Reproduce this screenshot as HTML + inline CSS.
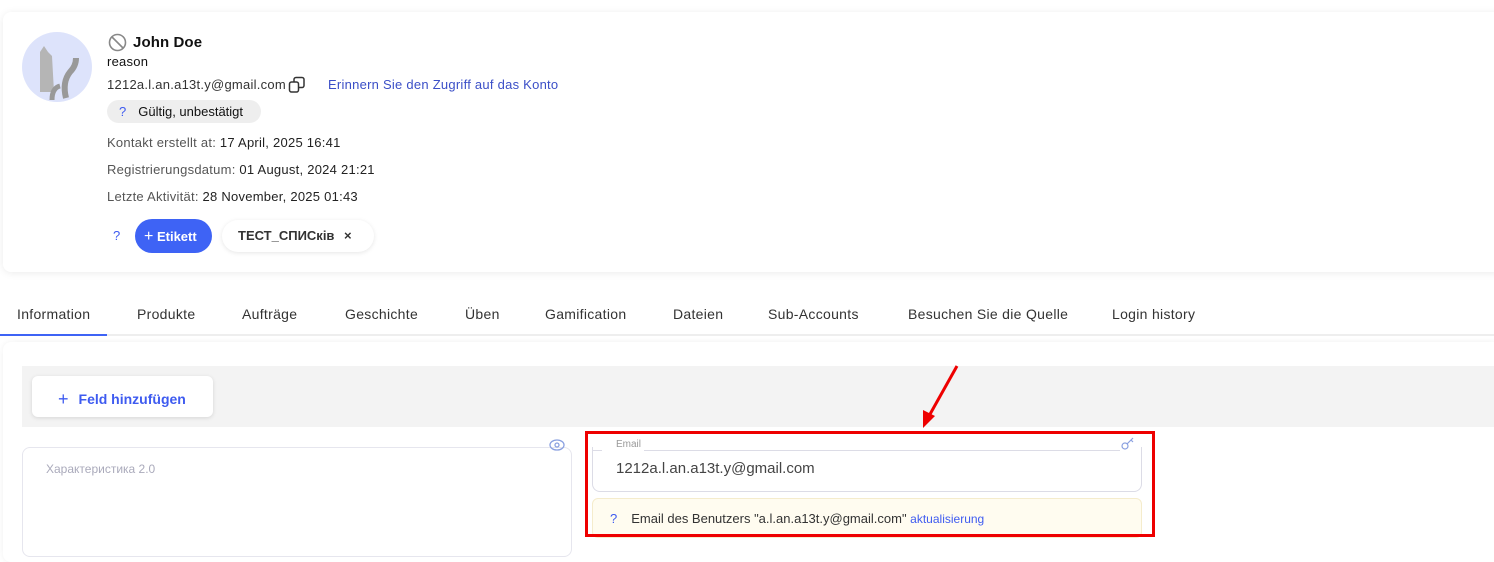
<!DOCTYPE html>
<html><head><meta charset="utf-8"><style>
*{box-sizing:border-box;margin:0;padding:0}
body{width:1494px;height:552px;overflow:hidden;background:#fff;font-family:"Liberation Sans","Noto Sans CJK SC",sans-serif;color:#222;position:relative}
.a{position:absolute}
.card{left:3px;top:12px;width:1500px;height:260px;background:#fff;border-radius:8px;box-shadow:0 1px 8px rgba(0,0,0,.08)}
.t13{font-size:13px;letter-spacing:.25px}
.lbl{color:#555}
.tab{position:absolute;top:306px;font-size:14px;color:#333;letter-spacing:.3px}
</style></head><body>
<div class="a card"></div>
<div class="a" style="left:22px;top:32px;width:70px;height:70px;border-radius:50%;background:#dde3fb;overflow:hidden">
<svg width="70" height="70" viewBox="0 0 70 70"><path d="M18 20 L22 14 L26 20 L30 24 L32 60 L18 60 Z" fill="#b5b5b5"/><path d="M44 66 Q40 50 48 40 Q54 34 54 26" stroke="#999" stroke-width="6" fill="none"/><path d="M30 68 Q30 56 38 54" stroke="#999" stroke-width="5" fill="none"/></svg></div>
<svg class="a" style="left:108px;top:33px" width="19" height="19" viewBox="0 0 19 19"><circle cx="9.5" cy="9.5" r="8" fill="none" stroke="#888" stroke-width="1.6"/><line x1="4" y1="4" x2="15" y2="15" stroke="#888" stroke-width="1.6"/></svg>
<div class="a" style="left:133px;top:34px;font-size:15px;font-weight:bold;color:#111;letter-spacing:.1px">John Doe</div>
<div class="a t13" style="left:107px;top:54px;color:#111">reason</div>
<div class="a t13" style="left:107px;top:77px;color:#333">1212a.l.an.a13t.y@gmail.com</div>
<svg class="a" style="left:288px;top:76px" width="18" height="18" viewBox="0 0 18 18"><rect x="1.5" y="6" width="9" height="10" rx="2" fill="none" stroke="#333" stroke-width="1.5"/><path d="M6 6V3.5a2 2 0 0 1 2-2h6a2 2 0 0 1 2 2v6a2 2 0 0 1-2 2h-3.5" fill="none" stroke="#333" stroke-width="1.5"/></svg>
<div class="a t13" style="left:328px;top:77px;color:#3b4fc7">Erinnern Sie den Zugriff auf das Konto</div>
<div class="a t13" style="left:107px;top:100px;height:23px;width:154px;background:#eee;border-radius:12px;padding:4px 0 0 12px;color:#111;letter-spacing:0"><span style="color:#3e5bf0;margin-right:12px">?</span>Gültig, unbestätigt</div>
<div class="a t13" style="left:107px;top:135px"><span class="lbl">Kontakt erstellt at: </span>17 April, 2025 16:41</div>
<div class="a t13" style="left:107px;top:162px"><span class="lbl">Registrierungsdatum: </span>01 August, 2024 21:21</div>
<div class="a t13" style="left:107px;top:189px"><span class="lbl">Letzte Aktivität: </span>28 November, 2025 01:43</div>
<div class="a t13" style="left:113px;top:228px;color:#3e5bf0">?</div>
<div class="a" style="left:135px;top:219px;width:77px;height:34px;background:#3e63f5;border-radius:17px;color:#fff;font-weight:bold;padding:9px 0 0 9px;font-size:13px"><span style="font-size:16px;font-weight:normal">+</span> Etikett</div>
<div class="a" style="left:222px;top:220px;width:152px;height:32px;background:#fff;border-radius:16px;box-shadow:0 1px 5px rgba(0,0,0,.1);padding:8px 0 0 16px;font-weight:bold;color:#333;font-size:13px">ТЕСТ_СПИСків <span style="margin-left:6px">×</span></div>
<div class="tab" style="left:17px">Information</div>
<div class="tab" style="left:137px">Produkte</div>
<div class="tab" style="left:242px">Aufträge</div>
<div class="tab" style="left:345px">Geschichte</div>
<div class="tab" style="left:465px">Üben</div>
<div class="tab" style="left:545px">Gamification</div>
<div class="tab" style="left:673px">Dateien</div>
<div class="tab" style="left:768px">Sub-Accounts</div>
<div class="tab" style="left:908px">Besuchen Sie die Quelle</div>
<div class="tab" style="left:1112px">Login history</div>
<div class="a" style="left:0;top:334px;width:1494px;height:2px;background:#eee"></div>
<div class="a" style="left:0;top:334px;width:107px;height:2px;background:#3e63f5"></div>
<div class="a" style="left:3px;top:342px;width:1500px;height:220px;border-radius:8px;box-shadow:0 0 6px rgba(0,0,0,.06)"></div>
<div class="a" style="left:22px;top:366px;width:1480px;height:61px;background:#f3f3f3"></div>
<div class="a" style="left:32px;top:376px;width:181px;height:41px;background:#fff;border-radius:6px;box-shadow:0 1px 4px rgba(0,0,0,.12);font-size:14px;font-weight:bold;color:#3e5bf0;padding:12px 0 0 26px"><span style="font-size:18px;font-weight:normal;position:relative;top:1px;margin-right:10px">+</span>Feld hinzufügen</div>
<div class="a" style="left:22px;top:447px;width:550px;height:110px;border:1px solid #e6e6ee;border-radius:8px"></div>
<div class="a" style="left:46px;top:462px;font-size:12px;color:#aab">Характеристика 2.0</div>
<svg class="a" style="left:549px;top:437px" width="16" height="16" viewBox="0 0 16 16"><ellipse cx="8" cy="8" rx="7" ry="5" fill="none" stroke="#8aa0e0" stroke-width="1.3"/><circle cx="8" cy="8" r="2" fill="none" stroke="#8aa0e0" stroke-width="1.3"/></svg>
<div class="a" style="left:592px;top:447px;width:550px;height:45px;border:1px solid #dcdce6;border-top:none;border-radius:0 0 8px 8px"></div>
<div class="a" style="left:592px;top:450px;width:10px;height:1px;background:#dcdce6"></div>
<div class="a" style="left:644px;top:450px;width:476px;height:1px;background:#dcdce6"></div>
<div class="a" style="left:616px;top:439px;font-size:10px;color:#999">Email</div>
<svg class="a" style="left:1120px;top:437px" width="16" height="14" viewBox="0 0 16 14"><circle cx="5" cy="9" r="3" fill="none" stroke="#8aa0e0" stroke-width="1.2"/><path d="M7 7L13 1M11 3l2 2" stroke="#8aa0e0" stroke-width="1.2" fill="none"/></svg>
<div class="a" style="left:616px;top:460px;font-size:15px;color:#444">1212a.l.an.a13t.y@gmail.com</div>
<div class="a" style="left:592px;top:498px;width:550px;height:40px;background:#fffcf0;border:1px solid #f5eccc;border-radius:6px"></div>
<div class="a" style="left:610px;top:511px;color:#333;font-size:13px"><span style="color:#3e5bf0;margin-right:14px">?</span>Email des Benutzers "a.l.an.a13t.y@gmail.com" <span style="color:#3e5bf0;font-size:12px">aktualisierung</span></div>
<div class="a" style="left:585px;top:431px;width:570px;height:106px;border:3px solid #ee0000"></div>
<svg class="a" style="left:915px;top:362px" width="50" height="70" viewBox="0 0 50 70"><line x1="42" y1="4" x2="14" y2="54" stroke="#ee0000" stroke-width="3"/><path d="M8 66 L8 48 L20 54 Z" fill="#ee0000"/></svg>
</body></html>
